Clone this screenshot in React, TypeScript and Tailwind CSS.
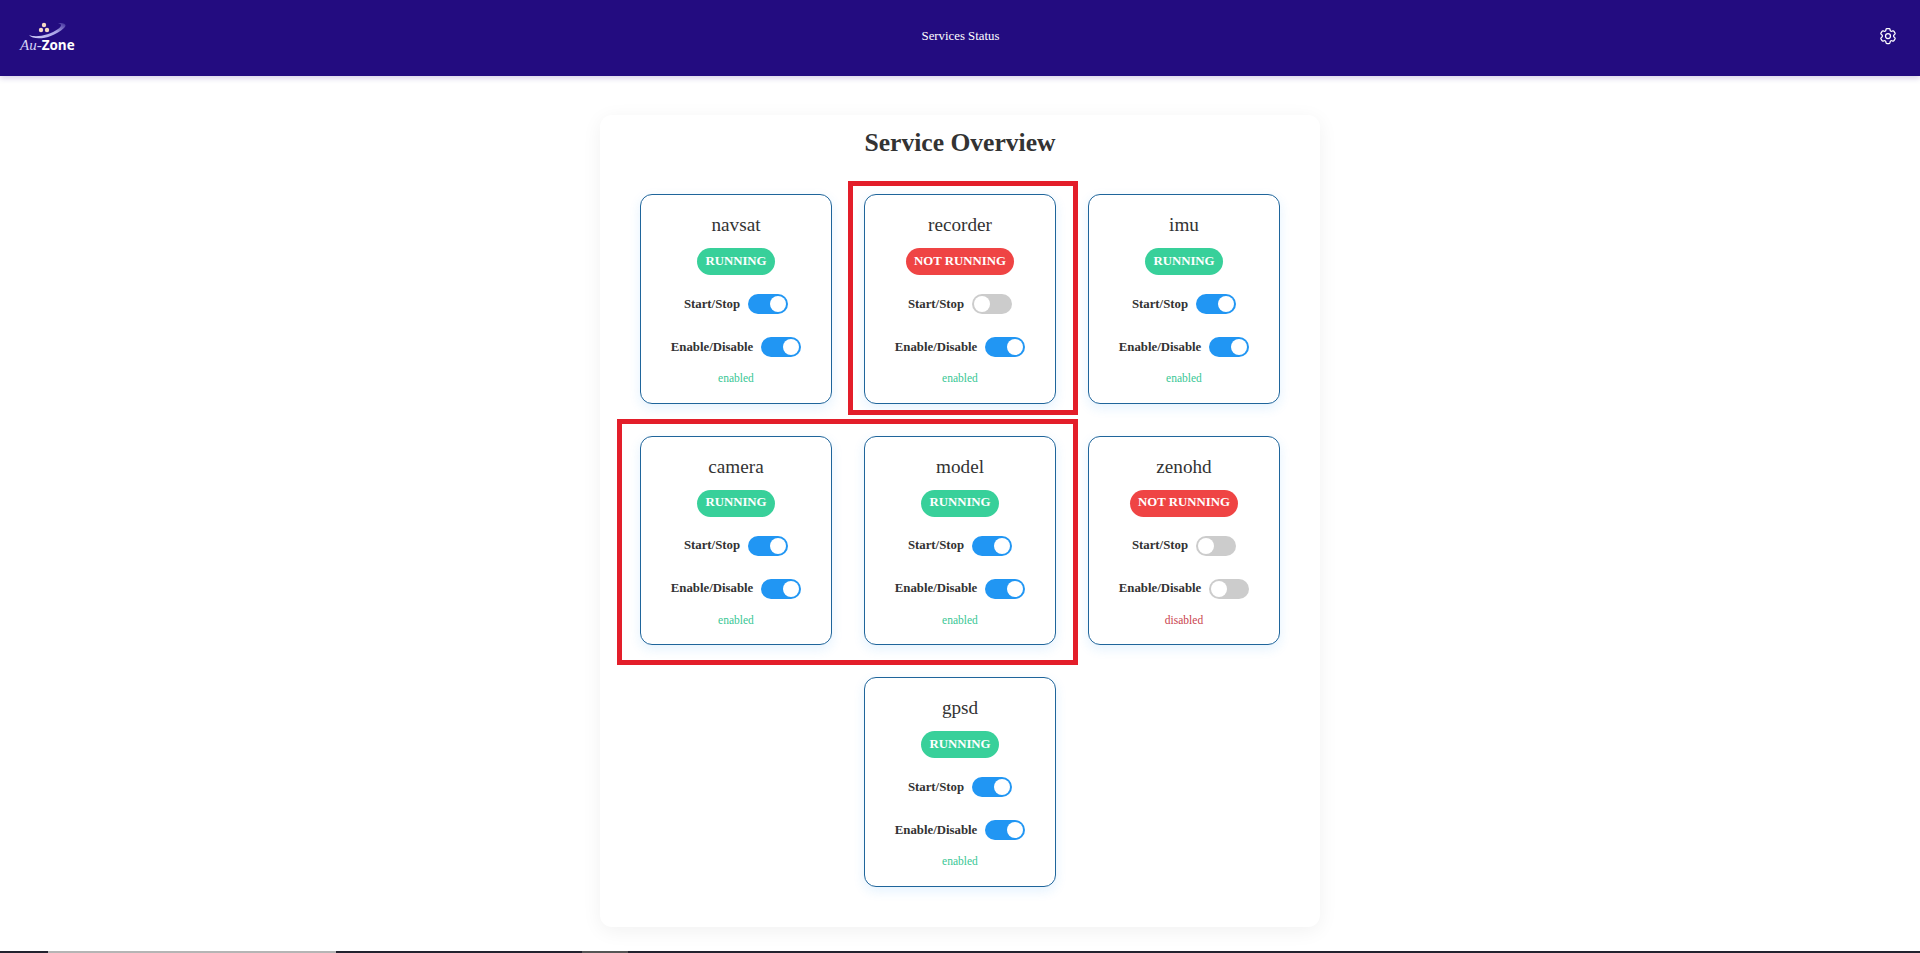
import * as React from "react";
import { HiOutlineCog6Tooth } from "react-icons/hi2";

type Service = {
  name: string;
  running: boolean;
  enabled: boolean;
};

const services: Service[] = [
  { name: "navsat", running: true, enabled: true },
  { name: "recorder", running: false, enabled: true },
  { name: "imu", running: true, enabled: true },
  { name: "camera", running: true, enabled: true },
  { name: "model", running: true, enabled: true },
  { name: "zenohd", running: false, enabled: false },
  { name: "gpsd", running: true, enabled: true },
];

const Toggle = ({ on }: { on: boolean }) => (
  <span
    className={`flex h-[20px] w-[40px] items-center rounded-full p-[2px] ${
      on ? "justify-end bg-[#2196f3]" : "justify-start bg-[#cccccc]"
    }`}
  >
    <span className="h-[16px] w-[16px] rounded-full bg-white" />
  </span>
);

const ToggleRow = ({ label, on }: { label: string; on: boolean }) => (
  <div className="flex items-center justify-center gap-2">
    <span className="text-[12.8px] leading-[15px] font-bold text-[#333333]">
      {label}
    </span>
    <Toggle on={on} />
  </div>
);

const ServiceCard = ({ service }: { service: Service }) => (
  <div className="flex h-[209.5px] w-[192px] flex-col items-center rounded-xl border border-[#1f659b] bg-white pt-[19px] shadow-[0_4px_12px_rgba(33,150,243,0.12)]">
    <h3 className="text-[19.2px] leading-[21px] font-normal text-[#333333]">
      {service.name}
    </h3>
    <span
      className={`mt-[13px] flex h-[27px] items-center rounded-full px-[8px] text-[12.8px] font-bold text-white ${
        service.running ? "bg-[#38d09a]" : "bg-[#ef4444]"
      }`}
    >
      {service.running ? "RUNNING" : "NOT RUNNING"}
    </span>
    <div className="mt-[19px]">
      <ToggleRow label="Start/Stop" on={service.running} />
    </div>
    <div className="mt-[23px]">
      <ToggleRow label="Enable/Disable" on={service.enabled} />
    </div>
    <span
      className={`mt-[14px] text-[11.5px] leading-[14px] ${
        service.enabled ? "text-[#38c795]" : "text-[#c9424c]"
      }`}
    >
      {service.enabled ? "enabled" : "disabled"}
    </span>
  </div>
);

const Logo = () => (
  <div className="relative -ml-px flex h-[30px] w-[56px] flex-col justify-end">
    <svg
      className="absolute top-[-2px] left-[8px]"
      width="46"
      height="20"
      viewBox="0 0 46 20"
    >
      <defs>
        <linearGradient id="swoosh" x1="0" y1="1" x2="1" y2="0">
          <stop offset="0" stopColor="#cfcbf7" />
          <stop offset="0.6" stopColor="#a8a2e6" />
          <stop offset="1" stopColor="#3d2a98" />
        </linearGradient>
      </defs>
      <path
        d="M1 14 C 6 20, 24 18, 36 7 C 39 4, 38 2, 30 2 C 34 3, 34 5, 30 8 C 22 14, 8 17, 1 14 Z"
        fill="url(#swoosh)"
      />
      <circle cx="16" cy="4" r="2.2" fill="#f6d9c4" />
      <circle cx="13" cy="9" r="2.2" fill="#f6d9c4" />
      <circle cx="19" cy="9" r="2.2" fill="#f6d9c4" />
    </svg>
    <div className="text-[15px] leading-[15px] whitespace-nowrap text-white">
      <span className="font-['Liberation_Serif',serif] italic text-[#d5d2f5]">
        Au-
      </span>
      <span className="font-['Open_Sans',sans-serif] text-[13.5px] font-bold">
        Zone
      </span>
    </div>
  </div>
);

const App = () => {
  return (
    <div className="relative flex h-[953px] flex-col overflow-hidden bg-white font-['Liberation_Serif',serif]">
      <header className="grid h-[76px] grid-cols-3 items-center bg-[#230c80] pr-[20px] pl-[21px] shadow-[0_2px_6px_rgba(35,12,128,0.2)]">
        <Logo />
        <span className="mb-[2px] text-center text-[12.8px] text-white">
          Services Status
        </span>
        <HiOutlineCog6Tooth
          size={20}
          className="mr-[2px] mb-[4px] justify-self-end text-white"
        />
      </header>

      <main className="flex-1 pt-[39px]">
        <div className="mx-auto w-[720px] rounded-xl bg-white px-[40px] pb-[40px] shadow-[0_4px_20px_rgba(0,0,0,0.06)]">
          <h1 className="pt-[13px] pb-[36px] text-center text-[25.6px] leading-[30px] font-bold text-[#333333]">
            Service Overview
          </h1>
          <div className="flex flex-wrap justify-center gap-x-[32px] gap-y-[32px]">
            {services.map((service) => (
              <ServiceCard key={service.name} service={service} />
            ))}
          </div>
        </div>
      </main>

      <div className="flex h-[2px]">
        <div className="w-[48px] bg-[#23232f]" />
        <div className="w-[288px] bg-[#b5b5b5]" />
        <div className="w-[246px] bg-[#23232f]" />
        <div className="w-[46px] bg-[#555555]" />
        <div className="flex-1 bg-[#23232f]" />
      </div>

      {/* red highlight boxes drawn over the cards */}
      <div className="absolute top-[181px] left-[848px] h-[234px] w-[230px] border-[5px] border-[#e31e2a]" />
      <div className="absolute top-[419px] left-[617px] h-[246px] w-[461px] border-[5px] border-[#e31e2a]" />
    </div>
  );
};

export default App;
